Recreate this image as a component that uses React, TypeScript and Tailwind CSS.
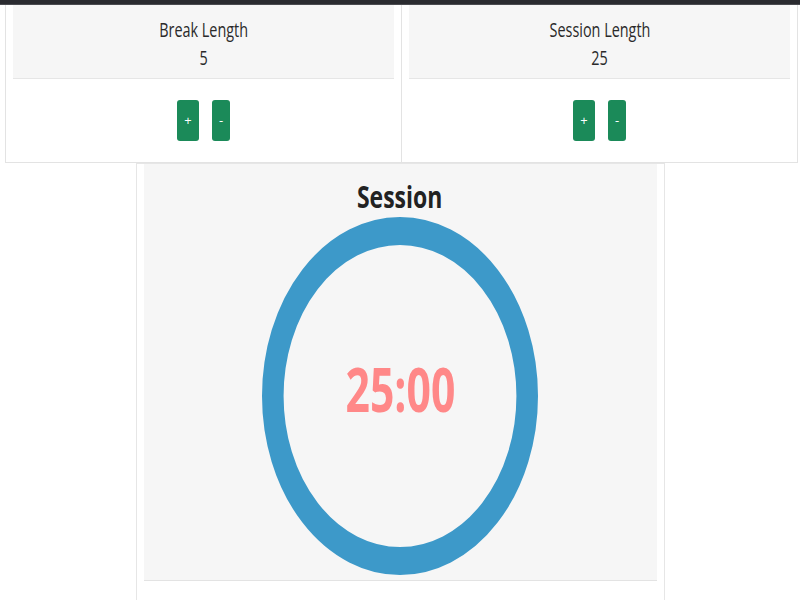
import React from "react";

const font = { fontFamily: '"Open Sans", "Noto Sans", sans-serif' };

function LengthCard({ title, value, last }: { title: string; value: string; last?: boolean }) {
  return (
    <div
      className={
        "flex flex-col border-b border-[#e3e3e3] bg-white " +
        (last ? "w-[396px] border-r" : "w-[397px] border-l border-r")
      }
    >
      <div className="mx-[7px] flex h-[74px] flex-col items-center border-b border-[#e6e6e6] bg-[#f6f6f6] pt-[11px] text-[#2a2a2a]">
        <div className="scale-x-[0.72] text-[20px] leading-[28px]">{title}</div>
        <div className="scale-x-[0.72] text-[20px] leading-[28px]">{value}</div>
      </div>
      <div className="flex items-center justify-center gap-[13px] py-[21px]">
        <button className="flex h-[41px] w-[22px] items-center justify-center rounded-[3px] bg-[#1b8a59] text-[13px] text-white">
          +
        </button>
        <button className="flex h-[41px] w-[18px] items-center justify-center rounded-[3px] bg-[#1b8a59] text-[13px] text-white">
          -
        </button>
      </div>
    </div>
  );
}

export default function App() {
  return (
    <div className="min-h-[600px] w-[800px] overflow-hidden bg-white" style={font}>
      <div className="h-[5px] bg-[#2a2b30] border-b border-[#4a4b50]" />
      <div className="flex pl-[5px]">
        <LengthCard title="Break Length" value="5" />
        <LengthCard title="Session Length" value="25" last />
      </div>
      <div className="flex justify-center">
        <div className="h-[437px] w-[529px] border border-b-0 border-[#e6e6e6] bg-white">
          <div className="mx-[7px] flex h-[417px] flex-col items-center border-b border-[#e3e3e3] bg-[#f6f6f6] pt-[14px]">
            <div className="scale-x-[0.74] text-[31px] font-bold leading-[36px] text-[#222]">Session</div>
            <div className="relative mt-[3px] flex h-[358px] w-[276px] items-center justify-center">
              <svg
                className="absolute inset-0"
                width="276"
                height="358"
                viewBox="0 0 358 358"
                preserveAspectRatio="none"
              >
                <circle cx="179" cy="179" r="165" fill="none" stroke="#3d99c9" strokeWidth="28" />
              </svg>
              <div className="relative -mt-[16px] scale-x-[0.7] text-[61px] font-bold leading-none text-[#ff8888]">
                25:00
              </div>
            </div>
          </div>
        </div>
      </div>
    </div>
  );
}
